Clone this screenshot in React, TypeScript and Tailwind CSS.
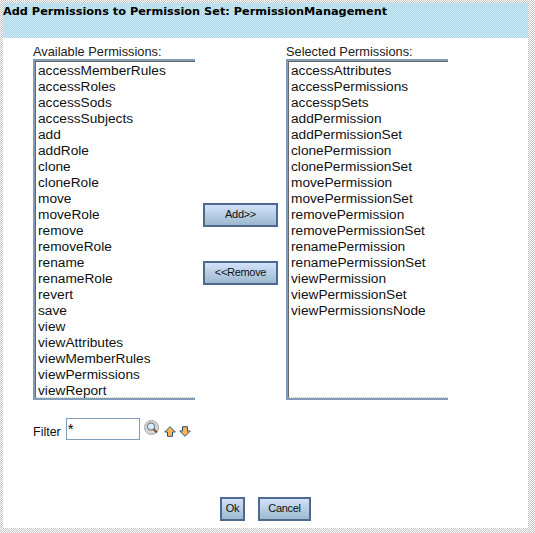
import type { ReactNode } from "react";

const available = [
  "accessMemberRules", "accessRoles", "accessSods", "accessSubjects", "add", "addRole", "clone", "cloneRole",
  "move", "moveRole", "remove", "removeRole", "rename", "renameRole", "revert", "save", "view", "viewAttributes",
  "viewMemberRules", "viewPermissions", "viewReport",
];

const selected = [
  "accessAttributes", "accessPermissions", "accesspSets", "addPermission", "addPermissionSet", "clonePermission",
  "clonePermissionSet", "movePermission", "movePermissionSet", "removePermission", "removePermissionSet",
  "renamePermission", "renamePermissionSet", "viewPermission", "viewPermissionSet", "viewPermissionsNode",
];

function PermList({ label, items }: { label: string; items: string[] }) {
  return (
    <div className="w-[162px] shrink-0">
      <div className="h-[16px] text-[12.8px] leading-[18px] text-[#222]">{label}</div>
      <div className="h-[341px] border-l-2 border-y-2 border-[#7f9db9] overflow-hidden">
        <div className="h-full border-l border-t border-b border-[#666] border-b-[#cfc8c0] border-dotted [border-left-style:solid] [border-top-style:solid] pl-[2px] pt-[1px]">
          {items.map((item) => (
            <div key={item} className="h-[16px] text-[13.7px] leading-[16px] text-[#111] whitespace-nowrap">
              {item}
            </div>
          ))}
        </div>
      </div>
    </div>
  );
}

function Btn({ children, className }: { children: ReactNode; className: string }) {
  return (
    <button
      type="button"
      className={`h-[24px] border-2 border-[#4d6a8c] bg-gradient-to-b from-[#d2e2fa] to-[#9db9cf] text-[11px] tracking-[-0.3px] text-[#111] leading-[18px] pb-[2px] ${className}`}
    >
      {children}
    </button>
  );
}

function Arrow({ down }: { down?: boolean }) {
  return (
    <svg width="12" height="11" viewBox="0 0 12 11" className={down ? "rotate-180" : ""}>
      <path d="M6 .7 11.3 6H8.5v4.3h-5V6H.7z" fill="#fbb64f" stroke="#27508a" strokeWidth="1" />
    </svg>
  );
}

export default function App() {
  return (
    <div className="w-[535px] h-[533px] pt-[3px] pl-[3px] bg-[repeating-conic-gradient(#c4c4c4_0_25%,#ffffff_0_50%)] bg-[length:2px_2px] font-['Liberation_Sans',Arial,sans-serif]">
      <div className="w-[525px] h-[525px] bg-white flex flex-col">
        <div className="h-[35px] bg-[repeating-conic-gradient(#b4d4ee_0_25%,#c4eef0_0_50%)] bg-[length:2px_2px] text-[11.3px] font-bold leading-[17px] text-black font-['DejaVu_Sans',sans-serif]">
          Add Permissions to Permission Set: PermissionManagement
        </div>

        <div className="flex pl-[30px] pt-[5px]">
          <PermList label="Available Permissions:" items={available} />
          <div className="w-[91px] flex flex-col items-center pt-[160px] gap-[34px]">
            <Btn className="w-[75px]">Add&gt;&gt;</Btn>
            <Btn className="w-[75px]">&lt;&lt;Remove</Btn>
          </div>
          <PermList label="Selected Permissions:" items={selected} />
        </div>

        <div className="flex items-start pl-[30px] mt-[18px] h-[22px]">
          <span className="text-[12.5px] leading-[28px] text-[#111] mr-[5px]">Filter</span>
          <input
            readOnly
            value="*"
            className="w-[74px] h-[22px] border border-[#7f9db9] px-[1px] text-[15px] text-black outline-none"
          />
          <svg width="16" height="16" viewBox="0 0 16 16" className="ml-[4px] mt-[2px]">
            <circle cx="7.5" cy="7.5" r="7" fill="#d4d4d4" stroke="#a8a8a8" />
            <circle cx="7" cy="6.5" r="3.6" fill="#d8eef8" stroke="#5c6f7d" />
            <path d="M9.5 9.2 13 12.5" stroke="#7a4f2a" strokeWidth="2" />
          </svg>
          <span className="ml-[4px] mt-[8px]"><Arrow /></span>
          <span className="ml-[3px] mt-[8px]"><Arrow down /></span>
        </div>

        <div className="flex pl-[217px] gap-[13px] mt-[57px]">
          <Btn className="w-[25px]">Ok</Btn>
          <Btn className="w-[53px]">Cancel</Btn>
        </div>
      </div>
    </div>
  );
}
